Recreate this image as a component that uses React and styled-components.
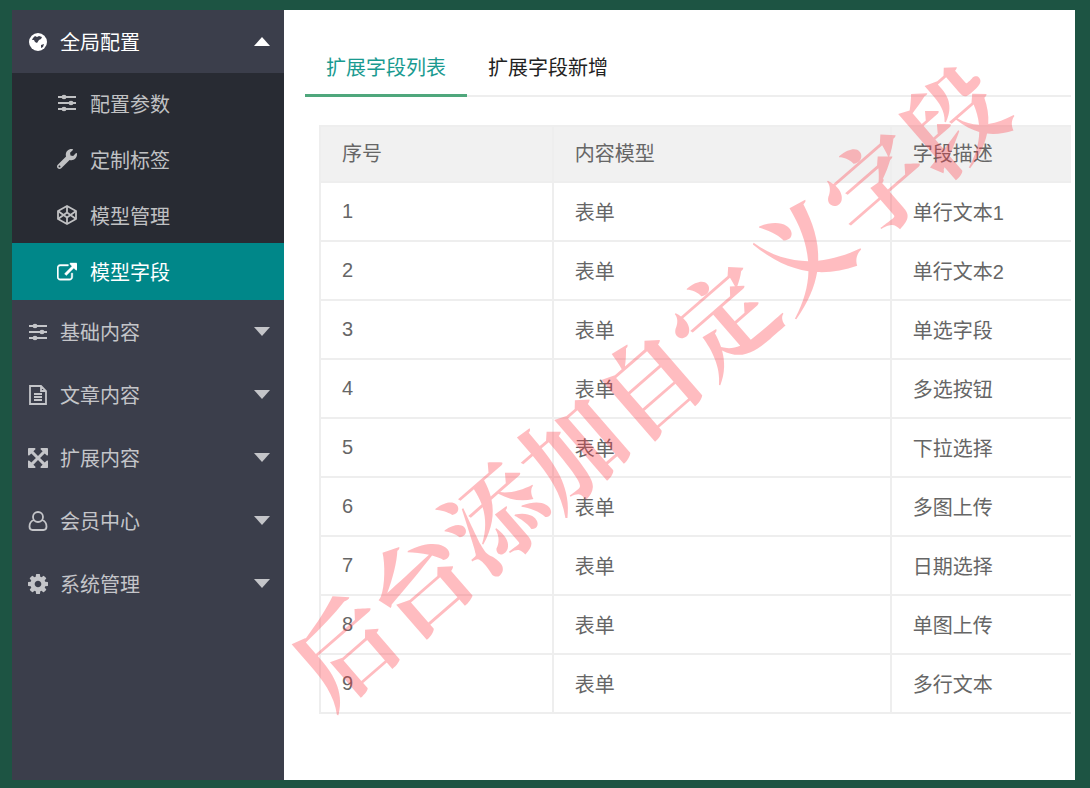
import React from "react";
import styled, { createGlobalStyle } from "styled-components";
import { FaWrench } from "react-icons/fa";

const colors = {
  frame: "#1d5443",
  side: "#3b3e4b",
  sub: "#282b33",
  active: "#008789",
  line: "#eeeeee",
  tab: "#199a90",
};

const GlobalStyle = createGlobalStyle`
  * { box-sizing: border-box; }

  body {
    margin: 0;
    background: ${colors.frame};
    font-family: "Liberation Sans", "Noto Sans CJK SC", sans-serif;
    font-size: 20px;
  }
`;

const Frame = styled.div`
  display: flex;
  min-height: 100vh;
  padding: 10px 15px 8px 12px;
  background: ${colors.frame};
`;

const Sidebar = styled.nav`
  flex: 0 0 272px;
  background: ${colors.side};
`;

const MenuButton = styled.button`
  display: flex;
  align-items: center;
  width: 100%;
  height: 63px;
  padding: 0 14px 0 16px;
  border: 0;
  background: transparent;
  color: ${props => (props.$open ? "#fff" : "#c4c5c9")};
  font: inherit;
  text-align: left;
  cursor: pointer;

  svg {
    flex: none;
    width: 20px;
    height: 20px;
    margin-right: 12px;
  }
`;

const SubButton = styled(MenuButton)`
  height: ${props => (props.$active ? 57 : 56)}px;
  padding-left: 45px;
  background: ${props => (props.$active ? colors.active : "transparent")};
  color: ${props => (props.$active ? "#fff" : "#c0c1c3")};

  svg {
    margin-right: 13px;
  }
`;

const MenuLabel = styled.span`
  flex: 1;
`;

const Caret = styled.span`
  border: 8px solid transparent;
  border-top: 9px solid currentColor;
  border-bottom: 0;
  transform: ${props => (props.$up ? "rotate(180deg)" : "none")};
`;

const SubMenu = styled.div`
  padding-top: 2px;
  background: ${colors.sub};
`;

const Main = styled.main`
  position: relative;
  flex: 1;
  min-width: 0;
  padding: 28px 4px 64px 21px;
  background: #fff;
`;

const Tabs = styled.div`
  display: flex;
  border-bottom: 2px solid ${colors.line};
`;

const Tab = styled.button`
  height: 59px;
  margin-bottom: -2px;
  padding: 0 21px;
  border: 0;
  border-bottom: 3px solid ${props => (props.$active ? "#4fa77c" : "transparent")};
  background: none;
  color: ${props => (props.$active ? colors.tab : "#222")};
  font: inherit;
  cursor: pointer;
`;

const Table = styled.table`
  width: calc(100% - 14px);
  margin: 28px 0 0 14px;
  border-collapse: collapse;
  table-layout: fixed;
  color: #666;
`;

const Col = styled.col`
  width: ${props => props.$width};
`;

const Cell = styled.td`
  height: 59px;
  padding: 0 21px;
  border: 2px solid ${colors.line};
  border-right-width: ${props => (props.$last ? 0 : 2)}px;
  font-weight: normal;
  text-align: left;
`;

const HeadCell = styled(Cell)`
  height: 56px;
  padding-bottom: 3px;
  background: #f1f1f1;
`;

const Watermark = styled.div`
  position: absolute;
  top: 371px;
  left: 361px;
  color: rgba(255, 60, 70, 0.34);
  font-family: "Noto Serif CJK SC", "Noto Sans CJK SC", serif;
  font-size: 101px;
  font-weight: 700;
  line-height: 1;
  white-space: nowrap;
  transform: translate(-50%, -50%) rotate(-41deg);
  pointer-events: none;
`;

const Globe = () => (
  <svg viewBox="0 0 20 20">
    <circle cx="10" cy="10" r="9" fill="currentColor" />
    <path d="M5 6l2-2 2 1 2-1 3 1-1 2-2 1-2 3-2-1-1-2-2 0zM13 13l3-1-1 3-2 1z" fill={colors.side} />
  </svg>
);

const Sliders = () => (
  <svg viewBox="0 0 20 20" fill="currentColor">
    <path d="M1 3h18v2H1zM1 9h18v2H1zM1 15h18v2H1z" />
    <ellipse cx="7" cy="4" rx="2.500" ry="2.200" />
    <ellipse cx="14" cy="10" rx="2.500" ry="2.200" />
    <ellipse cx="7" cy="16" rx="2.500" ry="2.200" />
  </svg>
);

const Codepen = () => (
  <svg viewBox="0 0 20 20" fill="none" stroke="currentColor" strokeWidth="1.800" strokeLinejoin="round">
    <path d="M10 1l9 5v8l-9 5-9-5V6z" />
    <path d="M1 6l9 6.500L19 6M1 14l9-6.500 9 6.500M10 1v6.500M10 12.500V19" />
  </svg>
);

const ExternalLink = () => (
  <svg viewBox="0 0 1792 1600" fill="currentColor">
    <path d="M1408 928v320q0 119-84.500 203.500T1120 1536H288q-119 0-203.500-84.500T0 1248V416q0-119 84.500-203.500T288 128h704q14 0 23 9t9 23v64q0 14-9 23t-23 9H288q-66 0-113 47t-47 113v832q0 66 47 113t113 47h832q66 0 113-47t47-113V928q0-14 9-23t23-9h64q14 0 23 9t9 23zm384-864v512q0 26-19 45t-45 19-45-19l-176-176-652 652q-10 10-23 10t-23-10L695 983q-10-10-10-23t10-23l652-652-176-176q-19-19-19-45t19-45 45-19h512q26 0 45 19t19 45z" stroke="currentColor" strokeWidth="40" />
  </svg>
);

const FileText = () => (
  <svg viewBox="0 0 20 20" fill="none" stroke="currentColor" strokeWidth="1.800">
    <path d="M2 1h11l5 5v13H2zM13 1v5h5M6 9h8M6 12h8M6 15h8" />
  </svg>
);

const Arrows = () => (
  <svg viewBox="128 128 1536 1536" fill="currentColor">
    <path d="M1411 541l-355 355 355 355 144-144q29-31 70-14 39 17 39 59v448q0 26-19 45t-45 19h-448q-42 0-59-40-17-39 14-69l144-144-355-355-355 355 144 144q31 30 14 69-17 40-59 40h-448q-26 0-45-19t-19-45v-448q0-42 40-59 39-17 69 14l144 144 355-355-355-355-144 144q-19 19-45 19-12 0-24-5-40-17-40-59v-448q0-26 19-45t45-19h448q42 0 59 40 17 39-14 69l-144 144 355 355 355-355-144-144q-31-30-14-69 17-40 59-40h448q26 0 45 19t19 45v448q0 42-39 59-13 5-25 5-26 0-45-19z" />
  </svg>
);

const User = () => (
  <svg viewBox="0 0 20 20" fill="none" stroke="currentColor" strokeWidth="1.800">
    <circle cx="10" cy="6" r="5" />
    <path d="M6 9C3 10 1.500 12 1.500 15.500c0 2 1.200 3.500 3 3.500h11c1.800 0 3-1.500 3-3.500 0-3.500-1.500-5.500-4.500-6.500" />
  </svg>
);

const Cog = () => (
  <svg viewBox="128 128 1536 1536" fill="currentColor">
    <path d="M1152 896q0-106-75-181t-181-75-181 75-75 181 75 181 181 75 181-75 75-181zm512-109v222q0 12-8 23t-20 13l-185 28q-19 54-39 91 35 50 107 138 10 12 10 25t-9 23q-27 37-99 108t-94 71q-12 0-26-9l-138-108q-44 23-91 38-16 136-29 186-7 28-36 28h-222q-14 0-24.500-8.500t-11.500-21.500l-28-184q-49-16-90-37l-141 107q-10 9-25 9-14 0-25-11-126-114-165-168-7-10-7-23 0-12 8-23 15-21 51-66.500t54-70.500q-27-50-41-99l-183-27q-13-2-21-12.500t-8-23.500v-222q0-12 8-23t19-13l186-28q14-46 39-92-40-57-107-138-10-12-10-24 0-10 9-23 26-36 98.500-107.500t94.500-71.500q13 0 26 10l138 107q44-23 91-38 16-136 29-186 7-28 36-28h222q14 0 24.500 8.500t11.500 21.500l28 184q49 16 90 37l142-107q9-9 24-9 13 0 25 10 129 119 165 170 7 8 7 22 0 12-8 23-15 21-51 66.500t-54 70.500q26 50 41 98l183 28q13 2 21 12.500t8 23.500z" />
  </svg>
);

const subMenu = [
  { label: "配置参数", icon: Sliders },
  { label: "定制标签", icon: FaWrench },
  { label: "模型管理", icon: Codepen },
  { label: "模型字段", icon: ExternalLink, active: true },
];

const menu = [
  { label: "基础内容", icon: Sliders },
  { label: "文章内容", icon: FileText },
  { label: "扩展内容", icon: Arrows },
  { label: "会员中心", icon: User },
  { label: "系统管理", icon: Cog },
];

const fields = [
  "单行文本1",
  "单行文本2",
  "单选字段",
  "多选按钮",
  "下拉选择",
  "多图上传",
  "日期选择",
  "单图上传",
  "多行文本",
];

const App = () => (
  <Frame>
    <GlobalStyle />
    <Sidebar>
      <MenuButton $open aria-expanded="true">
        <Globe />
        <MenuLabel>全局配置</MenuLabel>
        <Caret $up />
      </MenuButton>
      <SubMenu>
        {subMenu.map(({ label, icon: Icon, active }) => (
          <SubButton key={label} $active={active}>
            <Icon />
            <MenuLabel>{label}</MenuLabel>
          </SubButton>
        ))}
      </SubMenu>
      {menu.map(({ label, icon: Icon }) => (
        <MenuButton key={label} aria-expanded="false">
          <Icon />
          <MenuLabel>{label}</MenuLabel>
          <Caret />
        </MenuButton>
      ))}
    </Sidebar>
    <Main>
      <Tabs role="tablist">
        <Tab role="tab" aria-selected="true" $active>扩展字段列表</Tab>
        <Tab role="tab" aria-selected="false">扩展字段新增</Tab>
      </Tabs>
      <Table>
        <colgroup>
          <Col $width="31%" />
          <Col $width="45%" />
          <Col $width="24%" />
        </colgroup>
        <thead>
          <tr>
            <HeadCell as="th">序号</HeadCell>
            <HeadCell as="th">内容模型</HeadCell>
            <HeadCell as="th" $last>字段描述</HeadCell>
          </tr>
        </thead>
        <tbody>
          {fields.map((name, i) => (
            <tr key={name}>
              <Cell>{i + 1}</Cell>
              <Cell>表单</Cell>
              <Cell $last>{name}</Cell>
            </tr>
          ))}
        </tbody>
      </Table>
      <Watermark>后台添加自定义字段</Watermark>
    </Main>
  </Frame>
);

export default App;
